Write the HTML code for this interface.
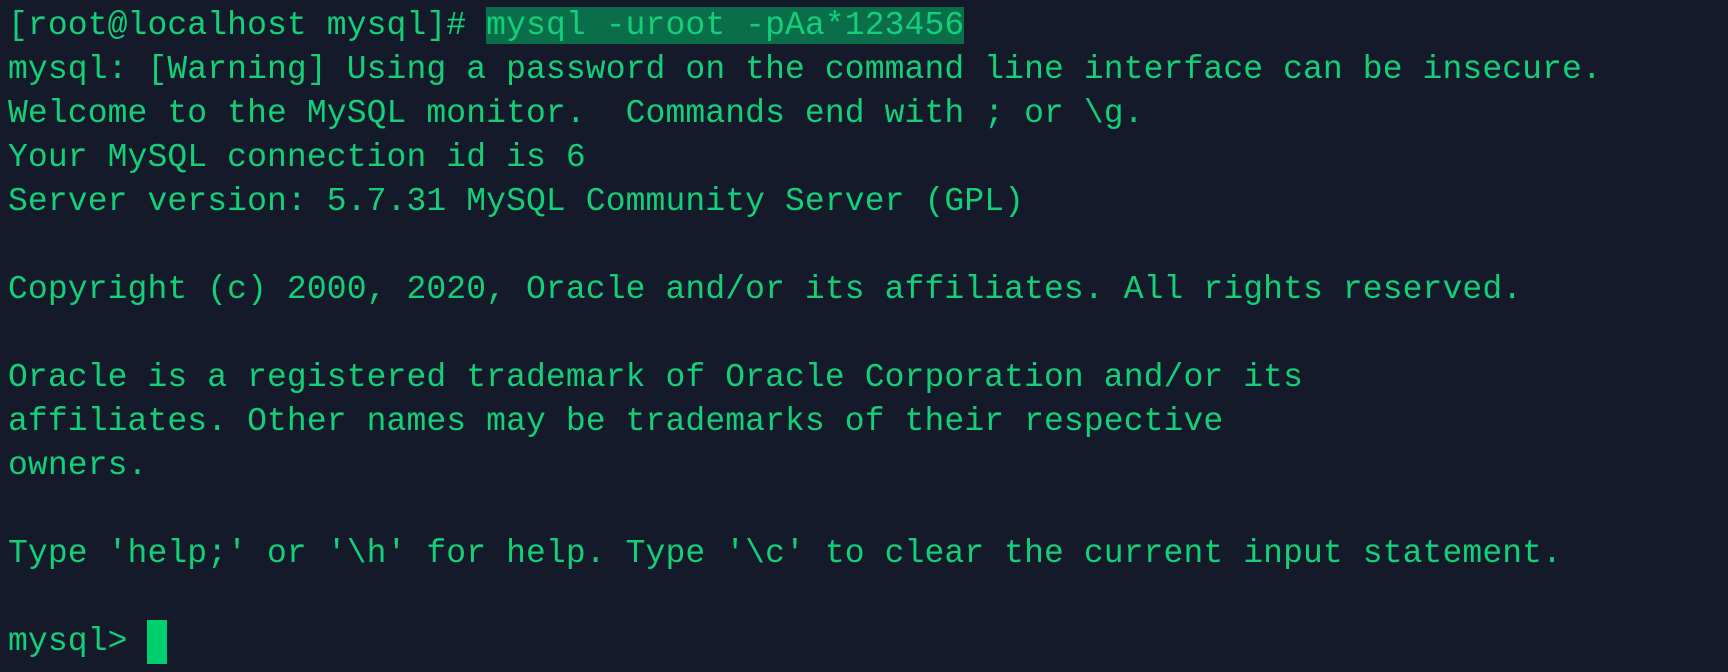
<!DOCTYPE html>
<html><head><meta charset="utf-8"><style>
html,body{margin:0;padding:0;background:#151a2b;width:1728px;height:672px;overflow:hidden}
pre{margin:0;padding:4px 0 0 8px;font-family:"Liberation Mono",monospace;font-size:33px;letter-spacing:0.12px;line-height:44px;color:#12cf78;white-space:pre}
.hl{background:#0b6e4b}
.cur{display:inline-block;width:20px;height:44px;background:#00cf6f;vertical-align:top}
</style></head><body><pre>[root@localhost mysql]# <span class="hl">mysql -uroot -pAa*123456</span>
mysql: [Warning] Using a password on the command line interface can be insecure.
Welcome to the MySQL monitor.  Commands end with ; or \g.
Your MySQL connection id is 6
Server version: 5.7.31 MySQL Community Server (GPL)

Copyright (c) 2000, 2020, Oracle and/or its affiliates. All rights reserved.

Oracle is a registered trademark of Oracle Corporation and/or its
affiliates. Other names may be trademarks of their respective
owners.

Type 'help;' or '\h' for help. Type '\c' to clear the current input statement.

mysql> <span class="cur"></span></pre></body></html>
